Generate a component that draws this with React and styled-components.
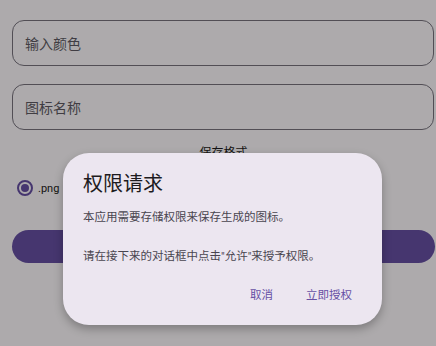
import React, { useState } from "react"
import styled, { createGlobalStyle } from "styled-components"

const GlobalStyle = createGlobalStyle`
  html, body {
    margin: 0;
    padding: 0;
    background: #fffbfe;
    font-family: Roboto, "Noto Sans CJK SC", sans-serif;
  }
`

const Page = styled.div`
  position: relative;
  width: 436px;
  height: 346px;
  overflow: hidden;
  box-sizing: border-box;
  padding: 20px 1px 0 12px;
  display: flex;
  flex-direction: column;
`

const Field = styled.div`
  height: 46px;
  box-sizing: border-box;
  margin-right: 1px;
  margin-bottom: 18px;
  border: 1.5px solid #79747e;
  border-radius: 12px;
  padding-left: 12px;
  display: flex;
  align-items: center;
  font-family: Roboto, "Noto Sans CJK SC", sans-serif;
  font-size: 14px;
  color: #5f5b64;
`

const SectionLabel = styled.div`
  margin-top: -3px;
  text-align: center;
  font-family: Roboto, "Noto Sans CJK SC", sans-serif;
  font-size: 12px;
  line-height: 16px;
  color: #1d1b20;
`

const RadioRow = styled.label`
  margin-top: 17px;
  height: 20px;
  padding-left: 5px;
  display: flex;
  align-items: center;
  gap: 5px;
  font-family: Roboto, sans-serif;
  font-size: 11px;
  color: #1d1b20;
`

const RadioDot = styled.span`
  width: 16px;
  height: 16px;
  box-sizing: border-box;
  border-radius: 50%;
  border: 2px solid #6750a4;
  display: flex;
  align-items: center;
  justify-content: center;
  &::after {
    content: "";
    width: 8px;
    height: 8px;
    border-radius: 50%;
    background: ${p => (p.$checked ? "#6750a4" : "transparent")};
  }
`

const PrimaryButton = styled.button`
  margin-top: 32px;
  height: 33px;
  border: none;
  border-radius: 17px;
  background: #6750a4;
`

const Scrim = styled.div`
  position: absolute;
  inset: 0;
  background: rgba(0, 0, 0, 0.32);
`

const Dialog = styled.div`
  position: absolute;
  left: 63px;
  top: 153px;
  width: 319px;
  box-sizing: border-box;
  padding: 17px 22px 13px 20px;
  border-radius: 26px;
  background: #ece6f0;
  box-shadow: 0 4px 10px rgba(0, 0, 0, 0.28);
  display: flex;
  flex-direction: column;
`

const Title = styled.h2`
  margin: 0;
  font-family: Roboto, "Noto Sans CJK SC", sans-serif;
  font-weight: 400;
  font-size: 20px;
  line-height: 28px;
  color: #1d1b20;
`

const Body = styled.p`
  margin: 10px 0 0;
  white-space: pre-line;
  font-family: Roboto, "Noto Sans CJK SC", sans-serif;
  font-size: 11.5px;
  line-height: 19.5px;
  color: #49454f;
`

const Actions = styled.div`
  margin-top: 9px;
  display: flex;
  justify-content: flex-end;
  gap: 17px;
`

const TextButton = styled.button`
  height: 36px;
  padding: 0 8px;
  border: none;
  background: transparent;
  font-family: Roboto, "Noto Sans CJK SC", sans-serif;
  font-size: 11.5px;
  color: #6750a4;
`

export default function App() {
  const [open] = useState(true)

  return (
    <>
      <GlobalStyle />
      <Page>
        <Field>输入颜色</Field>
        <Field>图标名称</Field>
        <SectionLabel>保存格式</SectionLabel>
        <RadioRow>
          <RadioDot $checked />
          .png
        </RadioRow>
        <PrimaryButton aria-label="保存" />
        {open && (
          <Scrim>
            <Dialog>
              <Title>权限请求</Title>
              <Body>{"本应用需要存储权限来保存生成的图标。\n\n请在接下来的对话框中点击\"允许\"来授予权限。"}</Body>
              <Actions>
                <TextButton>取消</TextButton>
                <TextButton>立即授权</TextButton>
              </Actions>
            </Dialog>
          </Scrim>
        )}
      </Page>
    </>
  )
}
